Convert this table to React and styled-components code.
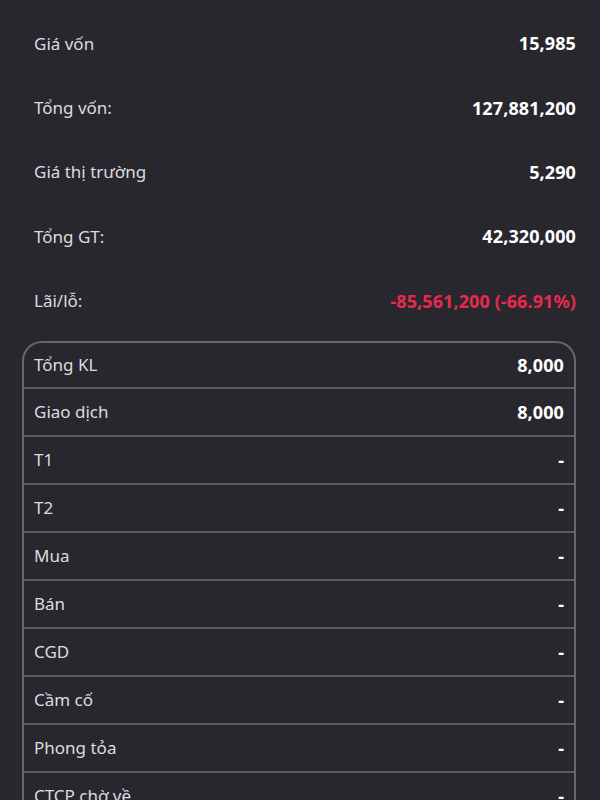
import React from "react"
import styled, { createGlobalStyle } from "styled-components"

const GlobalStyle = createGlobalStyle`
    html, body {
        margin: 0;
        padding: 0;
        background: #28272d;
    }
    body {
        font-family: "Noto Sans", "Open Sans", sans-serif;
    }
`;

const Page = styled.div`
    background: #28272d;
    height: 800px;
    overflow: hidden;
    padding: 11px 24px 0 22px;
    box-sizing: border-box;
`;

const Summary = styled.div`
    display: flex;
    flex-direction: column;
    padding: 0 0 0 12px;
`;

const SummaryRow = styled.div`
    display: flex;
    align-items: center;
    justify-content: space-between;
    height: 64.4px;
`;

const Label = styled.span`
    color: #dcdce0;
    font-size: 17px;
`;

const Value = styled.span`
    color: ${props => props.negative ? "#e8294f" : "#ffffff"};
    font-size: 18px;
    font-weight: 700;
    letter-spacing: 0.1px;
`;

const Table = styled.div`
    margin-top: 8px;
    border: 2px solid #66666c;
    border-bottom: none;
    border-radius: 20px 20px 0 0;
    overflow: hidden;
`;

const TableRow = styled.div`
    display: flex;
    align-items: center;
    justify-content: space-between;
    height: ${props => props.first ? "44px" : "46px"};
    padding: 0 10px;
    border-top: ${props => props.first ? "none" : "2px solid #5c5c62"};
`;

const summary = [
    { label: "Giá vốn", value: "15,985" },
    { label: "Tổng vốn:", value: "127,881,200" },
    { label: "Giá thị trường", value: "5,290" },
    { label: "Tổng GT:", value: "42,320,000" },
    { label: "Lãi/lỗ:", value: "-85,561,200 (-66.91%)", negative: true },
];

const rows = [
    { label: "Tổng KL", value: "8,000" },
    { label: "Giao dịch", value: "8,000" },
    { label: "T1", value: "-" },
    { label: "T2", value: "-" },
    { label: "Mua", value: "-" },
    { label: "Bán", value: "-" },
    { label: "CGD", value: "-" },
    { label: "Cầm cố", value: "-" },
    { label: "Phong tỏa", value: "-" },
    { label: "CTCP chờ về", value: "-" },
];

const App = () => (
    <Page>
        <GlobalStyle />
        <Summary>
            {summary.map(item => (
                <SummaryRow key={item.label}>
                    <Label>{item.label}</Label>
                    <Value negative={item.negative}>{item.value}</Value>
                </SummaryRow>
            ))}
        </Summary>
        <Table>
            {rows.map((row, i) => (
                <TableRow key={row.label} first={i === 0}>
                    <Label>{row.label}</Label>
                    <Value>{row.value}</Value>
                </TableRow>
            ))}
        </Table>
    </Page>
);

export default App;
